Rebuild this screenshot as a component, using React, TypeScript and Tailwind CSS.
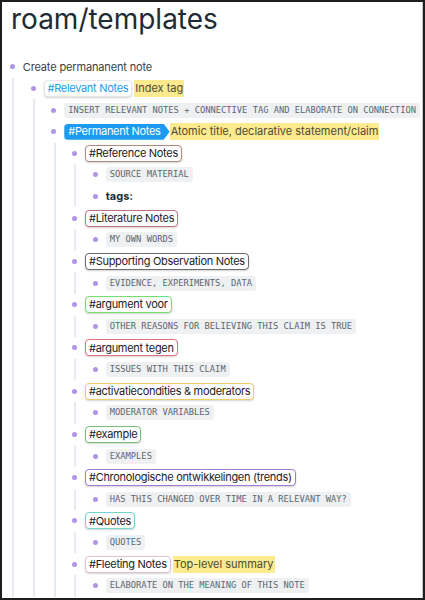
import React from "react";

type Node = {
  tag?: string;
  tagColor?: string;
  tagText?: string;
  primary?: boolean;
  highlight?: string;
  code?: string;
  text?: string;
  bold?: string;
  children?: Node[];
};

const tree: Node[] = [
  {
    text: "Create permananent note",
    children: [
      {
        tag: "#Relevant Notes",
        tagColor: "border-[#e3e8ed]",
        tagText: "text-[#1f9bea]",
        highlight: "Index tag",
        children: [
          { code: "INSERT RELEVANT NOTES + CONNECTIVE TAG AND ELABORATE ON CONNECTION" },
          {
            tag: "#Permanent Notes",
            primary: true,
            highlight: "Atomic title, declarative statement/claim",
            children: [
              {
                tag: "#Reference Notes",
                tagColor: "border-[#b08a7c]",
                children: [{ code: "SOURCE MATERIAL" }, { bold: "tags:" }],
              },
              { tag: "#Literature Notes", tagColor: "border-[#c0727c]", children: [{ code: "MY OWN WORDS" }] },
              {
                tag: "#Supporting Observation Notes",
                tagColor: "border-[#6b6b6b]",
                children: [{ code: "EVIDENCE, EXPERIMENTS, DATA" }],
              },
              {
                tag: "#argument voor",
                tagColor: "border-[#74e06c]",
                children: [{ code: "OTHER REASONS FOR BELIEVING THIS CLAIM IS TRUE" }],
              },
              { tag: "#argument tegen", tagColor: "border-[#e2707e]", children: [{ code: "ISSUES WITH THIS CLAIM" }] },
              {
                tag: "#activatiecondities & moderators",
                tagColor: "border-[#f2cc6a]",
                children: [{ code: "MODERATOR VARIABLES" }],
              },
              { tag: "#example", tagColor: "border-[#78c07a]", children: [{ code: "EXAMPLES" }] },
              {
                tag: "#Chronologische ontwikkelingen (trends)",
                tagColor: "border-[#a27ad6]",
                children: [{ code: "HAS THIS CHANGED OVER TIME IN A RELEVANT WAY?" }],
              },
              { tag: "#Quotes", tagColor: "border-[#74d4cf]", children: [{ code: "QUOTES" }] },
              {
                tag: "#Fleeting Notes",
                tagColor: "border-[#e8bfd6]",
                highlight: "Top-level summary",
                children: [{ code: "ELABORATE ON THE MEANING OF THIS NOTE" }],
              },
            ],
          },
        ],
      },
    ],
  },
];

function Content({ node }: { node: Node }) {
  return (
    <div className={`flex items-center whitespace-nowrap ${node.primary ? "gap-0" : "gap-[2px]"}`}>
      {node.text && <span className="text-[11px] tracking-[-0.15px] text-[#394049]">{node.text}</span>}
      {node.bold && <span className="text-[11px] font-bold text-[#202b33]">{node.bold}</span>}
      {node.tag && node.primary && (
        <span className="inline-flex items-center h-[16px] pl-[4px] pr-[9px] rounded-l-[4px] bg-[#1d9bf0] text-white text-[11px] tracking-[-0.3px] [clip-path:polygon(0_0,calc(100%_-_6px)_0,100%_50%,calc(100%_-_6px)_100%,0_100%)]">
          {node.tag}
        </span>
      )}
      {node.tag && !node.primary && (
        <span
          className={`inline-flex items-center h-[17px] px-[3px] rounded-[4px] border bg-white text-[11px] tracking-[-0.3px] shadow-[0_1px_2px_rgba(0,0,0,0.18)] ${node.tagColor} ${node.tagText ?? "text-[#1c2127]"}`}
        >
          {node.tag}
        </span>
      )}
      {node.highlight && (
        <span className="inline-flex items-center h-[17px] px-[1px] bg-[#fbea8e] text-[11px] text-[#4d4a35]">
          {node.highlight}
        </span>
      )}
      {node.code && (
        <span className="inline-block h-[15px] leading-[15px] px-[4px] rounded-[3px] bg-[#eef0f2] text-[#5c6670] text-[8.75px] font-['DejaVu_Sans_Mono',monospace]">
          {node.code}
        </span>
      )}
    </div>
  );
}

function Block({ node }: { node: Node }) {
  return (
    <div>
      <div className="flex items-center h-[21.625px]">
        <span className="w-[20.75px] flex justify-center shrink-0">
          <span className="w-[5px] h-[5px] rounded-full bg-[#b094e6]" />
        </span>
        <Content node={node} />
      </div>
      {node.children && (
        <div className="ml-[10px] pl-[8.75px] border-l-2 border-[#e6ebf1]">
          {node.children.map((c, i) => (
            <Block key={i} node={c} />
          ))}
        </div>
      )}
    </div>
  );
}

export default function App() {
  return (
    <div className="w-[425px] h-[600px] overflow-hidden bg-white border-2 border-[#1e1e1e] font-['Inter','Liberation_Sans',sans-serif]">
      <div className="h-full border-r border-[#c8c8c8]">
        <h1 className="pl-[9px] text-[28px] leading-[34px] text-[#202b33] font-normal">roam/templates</h1>
        <div className="mt-[20px]">
          {tree.map((n, i) => (
            <Block key={i} node={n} />
          ))}
        </div>
      </div>
    </div>
  );
}
